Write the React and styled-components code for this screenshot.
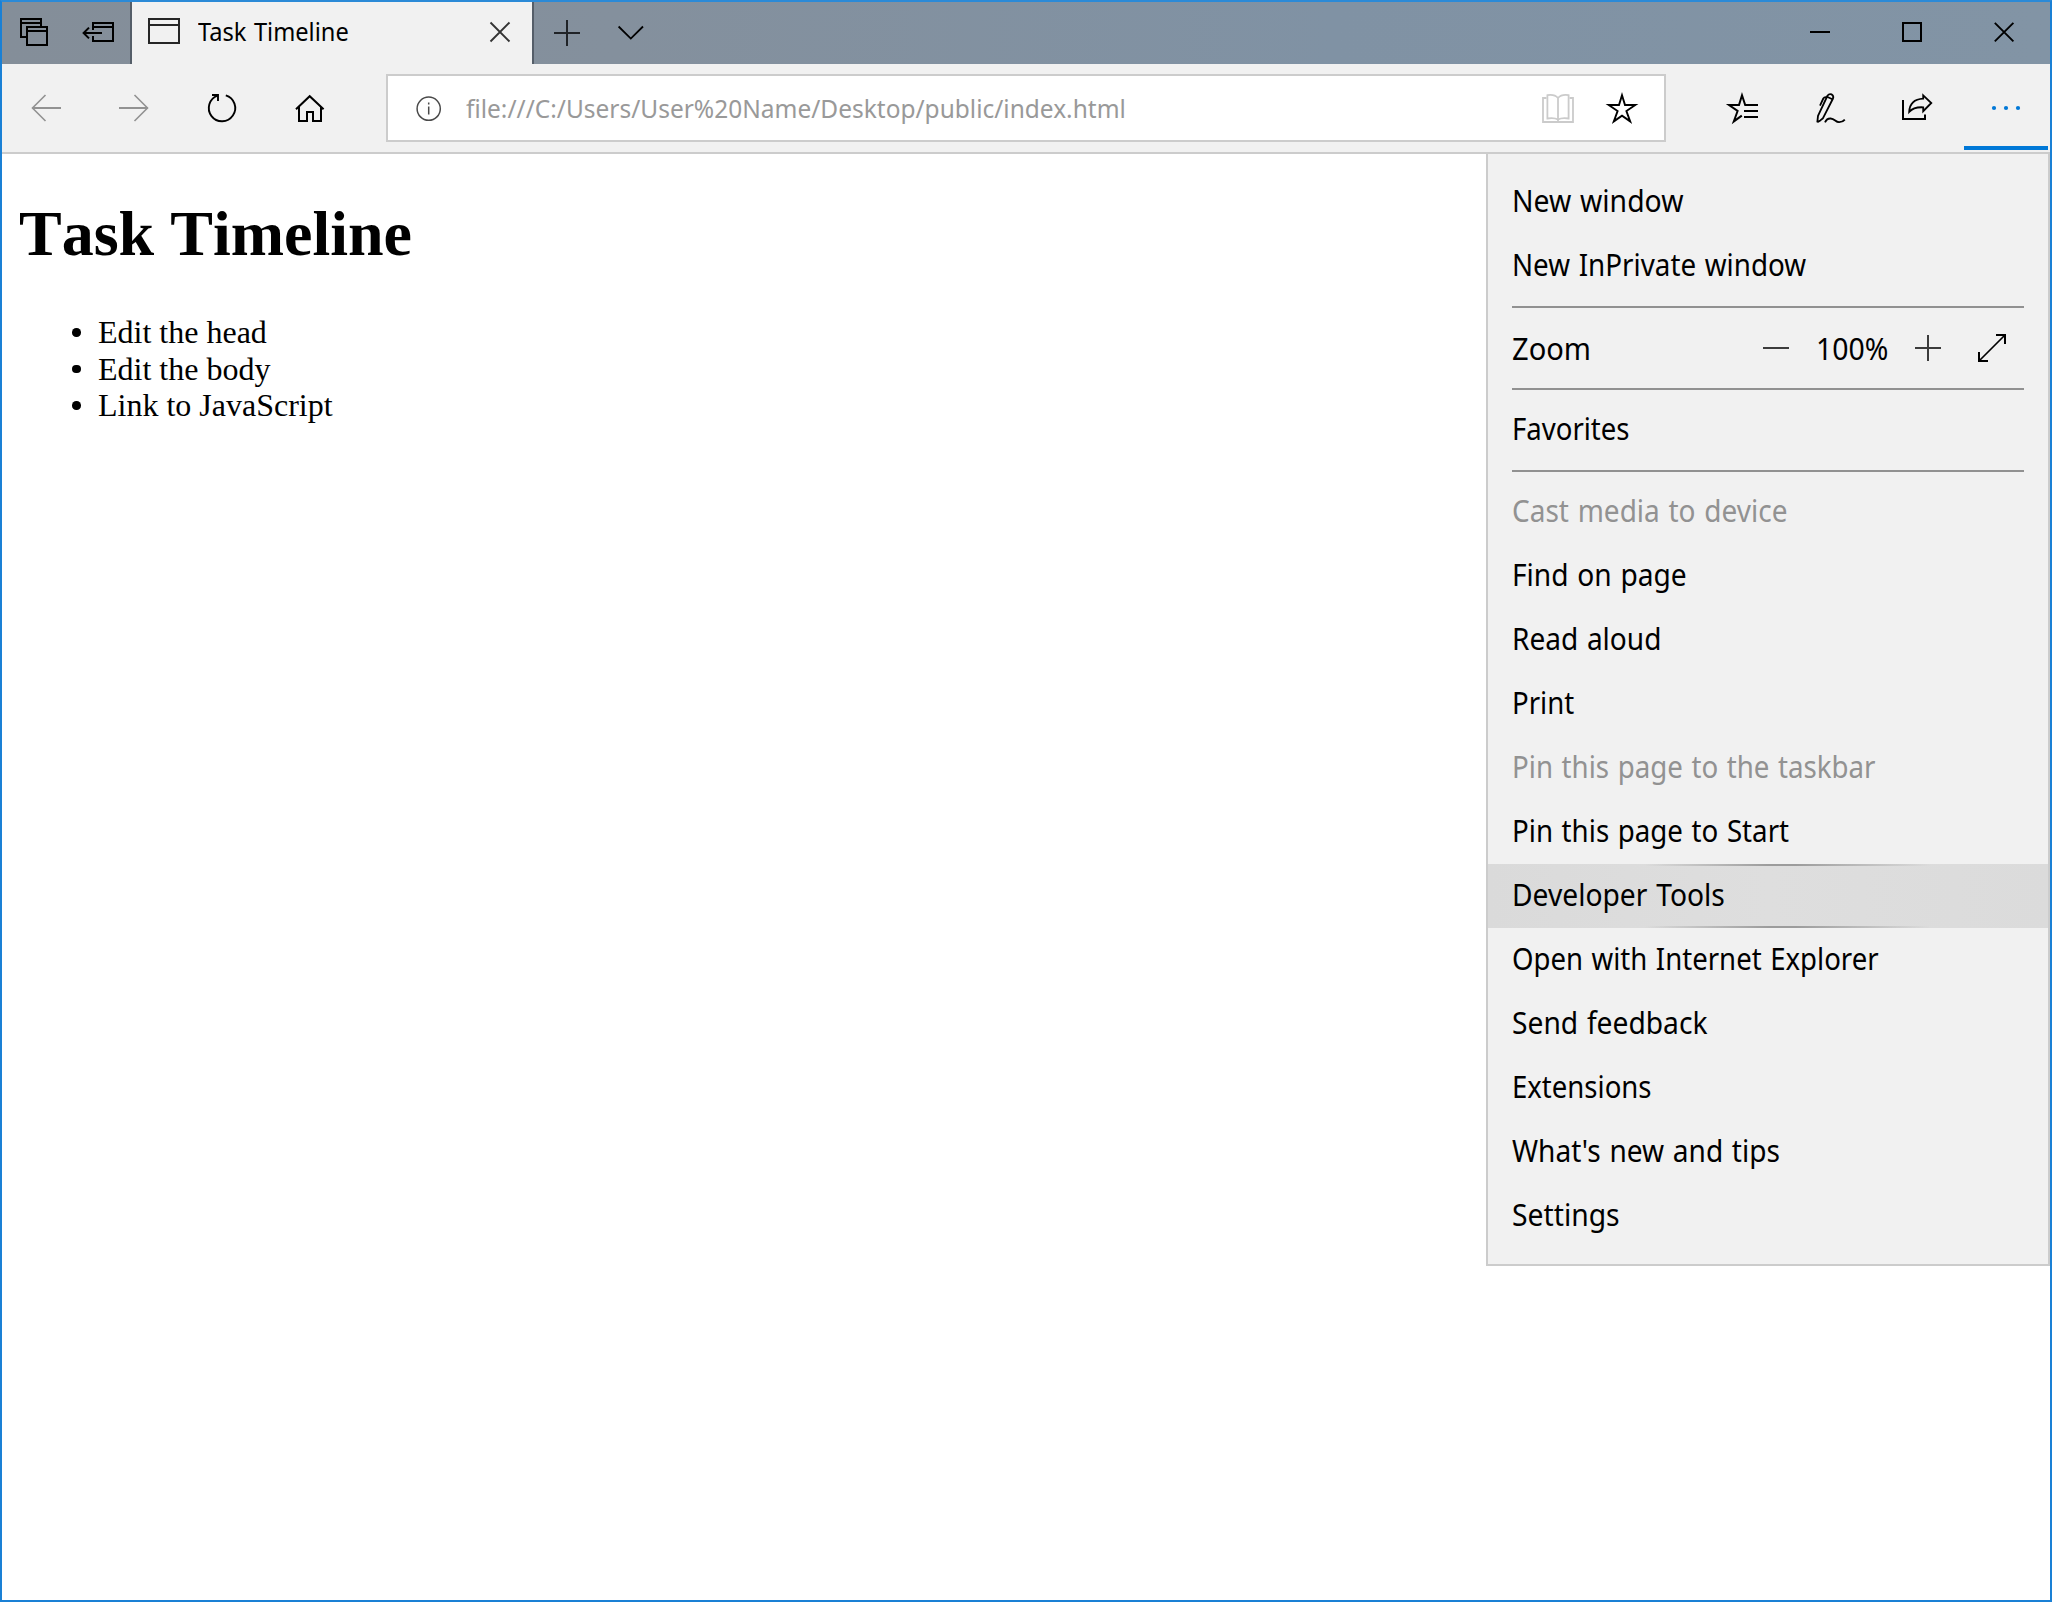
import React, { useLayoutEffect, useRef, useState } from "react";
import styled, { createGlobalStyle } from "styled-components";

const GlobalStyle = createGlobalStyle`
  * { box-sizing: border-box; }
  html, body { margin: 0; padding: 0; background: #fff; }
`;

const UI_FONT = '"Segoe UI", "Noto Sans", sans-serif';

const BrowserWindow = styled.div`
  position: relative;
  display: flex;
  flex-direction: column;
  width: 2052px;
  height: 1602px;
  border: 2px solid #1a80d5;
  border-top-color: #2b8ad7;
  background: #fff;
  font-family: ${UI_FONT};
  color: #000;
  overflow: hidden;
`;

const TitleBar = styled.header`
  display: flex;
  height: 62px;
  background: linear-gradient(90deg, #848e99 0%, #84909d 30%, #8092a4 65%, #8294a5 100%);
`;

const Spacer = styled.div`
  flex: 1;
`;

const EdgeGap = styled.div`
  flex: none;
  width: 2px;
`;

const Tab = styled.div`
  display: flex;
  align-items: flex-start;
  width: 404px;
  background: #f1f1f1;
  border: solid #555e69;
  border-width: 0 2px;
`;

const Toolbar = styled.nav`
  display: flex;
  flex: none;
  height: 90px;
  background: #f1f1f1;
  border-bottom: 2px solid #ccc;
`;

const IconButton = styled.button`
  display: flex;
  flex: none;
  padding: 0;
  border: 0;
  background: none;
  color: ${(p) => p.$color || "#000"};
  margin-left: ${(p) => p.$gap || 0}px;
`;

const Drawing = styled.svg`
  display: block;
  flex: none;
  fill: none;
  color: ${(p) => p.$color || "inherit"};
  stroke: currentColor;
  stroke-width: ${(p) => p.$weight || 2};
`;

const Dot = styled.circle`
  fill: currentColor;
  stroke: none;
`;

const MoreButton = styled(IconButton)`
  height: 86px;
  border-bottom: 4px solid #0078d7;
`;

const AddressBar = styled.div`
  display: flex;
  align-items: center;
  width: 1280px;
  height: 68px;
  margin: 10px 0 0 42px;
  border: 2px solid #ccc;
  background: #fff;
`;

const FittedText = styled.span`
  display: inline-block;
  white-space: pre;
  word-spacing: 1.5px;
  transform-origin: 0 50%;
`;

const TextSlot = styled.span`
  display: block;
  flex: none;
  width: ${(p) => p.$width}px;
  font-size: ${(p) => p.$size}px;
  line-height: ${(p) => p.$line || 62}px;
  margin-left: ${(p) => p.$left || 0}px;
  color: ${(p) => p.$color || "inherit"};
`;

const Menu = styled.aside`
  position: absolute;
  top: 152px;
  right: 0;
  display: flex;
  flex-direction: column;
  width: 564px;
  height: 1112px;
  padding: 16px 0;
  background: #f1f1f1;
  border: 2px solid #ccc;
  border-top: 0;
`;

const MenuRow = styled.div`
  display: flex;
  align-items: flex-start;
  height: 64px;
  padding-left: 23.6px;
  color: ${(p) => (p.$disabled ? "#929292" : "#000")};
  ${(p) =>
    p.$active &&
    `
    background:
      linear-gradient(90deg, transparent 28%, #9c9c9c 50%, #9c9c9c 55%, transparent 79%) top / 100% 2px no-repeat,
      linear-gradient(90deg, transparent 28%, #9c9c9c 50%, #9c9c9c 55%, transparent 79%) bottom / 100% 2px no-repeat,
      linear-gradient(90deg, #dadada, #dedede 50%, #dbdbdb);
  `}
`;

const ZoomRow = styled(MenuRow)`
  ${TextSlot} {
    padding-top: 2px;
  }
`;

const Divider = styled.hr`
  width: 512px;
  height: 2px;
  margin: 8px 24px;
  border: 0;
  background: #919191;
  flex: none;
`;

const Page = styled.main`
  padding: 43px 16px 0;
  font-family: "Liberation Serif", "Times New Roman", serif;
  font-kerning: none;
`;

const Heading = styled.h1`
  margin: 0 0 0 1px;
  font-size: 64px;
  line-height: 74px;
  font-weight: 700;
`;

const TaskList = styled.ul`
  list-style: none;
  margin: 43px 0 0;
  padding: 0 0 0 54px;
`;

const Task = styled.li`
  display: flex;
  align-items: center;
  gap: 17.5px;
  font-size: 32px;
  line-height: 36.5px;

  &::before {
    content: "";
    width: 8.5px;
    height: 8.5px;
    border-radius: 50%;
    background: #000;
  }
`;

/* Condenses a label horizontally so that its advance equals the given width. */
function Label({ width, children, ...rest }) {
  const ref = useRef(null);
  const [scale, setScale] = useState(1);
  useLayoutEffect(() => {
    setScale(width / ref.current.offsetWidth);
  }, [width, children]);
  return (
    <TextSlot $width={width} {...rest}>
      <FittedText ref={ref} style={{ transform: `scaleX(${scale})` }}>
        {children}
      </FittedText>
    </TextSlot>
  );
}

/* Icons are drawn in window coordinates; area is the x, y, width, height shown. */
function Icon({ area, children, ...rest }) {
  return (
    <Drawing width={area[2]} height={area[3]} viewBox={area.join(" ")} {...rest}>
      {children}
    </Drawing>
  );
}

const menuGroups = [
  [
    { text: "New window", width: 171 },
    { text: "New InPrivate window", width: 294.5 },
  ],
  "zoom",
  [{ text: "Favorites", width: 117.5 }],
  [
    { text: "Cast media to device", width: 275.5, disabled: true },
    { text: "Find on page", width: 174.5 },
    { text: "Read aloud", width: 149.5 },
    { text: "Print", width: 62.5 },
    { text: "Pin this page to the taskbar", width: 363.5, disabled: true },
    { text: "Pin this page to Start", width: 277 },
    { text: "Developer Tools", width: 212.5, active: true },
    { text: "Open with Internet Explorer", width: 366.5 },
    { text: "Send feedback", width: 195.5 },
    { text: "Extensions", width: 139.5 },
    { text: "What's new and tips", width: 267.5 },
    { text: "Settings", width: 107.5 },
  ],
];

function ZoomControls() {
  return (
    <ZoomRow>
      <Label width={79.5} $size={30}>Zoom</Label>
      <IconButton $gap={154.9} $color="#3c3c3c">
        <Icon area={[1746, 316, 60, 64]}>
          <path d="M1763 348H1789" />
        </Icon>
      </IconButton>
      <Label width={72} $size={30} $left={10}>100%</Label>
      <IconButton $gap={10} $color="#3c3c3c">
        <Icon area={[1898, 316, 60, 64]}>
          <path d="M1915 348H1941M1928 335V361" />
        </Icon>
      </IconButton>
      <IconButton>
        <Icon area={[1958, 316, 66, 64]}>
          <path d="M1996 335H2005V344M1979 352V361H1988" />
          <path d="M2005 335L1979 361" strokeWidth="1.7" />
        </Icon>
      </IconButton>
    </ZoomRow>
  );
}

export default function App() {
  return (
    <>
      <GlobalStyle />
      <BrowserWindow>
        <TitleBar>
          <IconButton>
            <Icon area={[2, 2, 64, 62]}>
              <path d="M26 37H21V19H41V26M21 23H41" />
              <path d="M27 27H47V45H27ZM27 31H47" />
            </Icon>
          </IconButton>
          <IconButton>
            <Icon area={[66, 2, 64, 62]}>
              <path d="M93 30V23H113V41H93V36M93 27H113M84 33H102" />
              <path d="M89 27.6L83.6 33L89 38.4" />
            </Icon>
          </IconButton>
          <Tab>
            <Icon area={[132, 2, 64, 62]} $color="#262626">
              <path d="M149 19H179V43H149ZM149 25H179" />
            </Icon>
            <Label width={151} $size={25.5} $left={2} $line={59}>Task Timeline</Label>
            <Spacer />
            <IconButton $color="#333">
              <Icon area={[468, 2, 64, 62]} $weight={1.9}>
                <path d="M490.5 22.5L509.5 41.5M509.5 22.5L490.5 41.5" />
              </Icon>
            </IconButton>
          </Tab>
          <IconButton $color="#202327">
            <Icon area={[534, 2, 64, 62]}>
              <path d="M554 33H580M567 20V46" />
            </Icon>
          </IconButton>
          <IconButton>
            <Icon area={[598, 2, 64, 62]} $weight={1.8}>
              <path d="M618.6 26.5L630.8 38.6L643 26.5" />
            </Icon>
          </IconButton>
          <Spacer />
          <IconButton>
            <Icon area={[1774, 2, 92, 62]}>
              <path d="M1810 32H1830" />
            </Icon>
          </IconButton>
          <IconButton>
            <Icon area={[1866, 2, 92, 62]}>
              <path d="M1903 23H1921V41H1903Z" />
            </Icon>
          </IconButton>
          <IconButton>
            <Icon area={[1958, 2, 92, 62]} $weight={1.9}>
              <path d="M1994.8 22.8L2013.4 41.4M2013.4 22.8L1994.8 41.4" />
            </Icon>
          </IconButton>
        </TitleBar>

        <Toolbar>
          <IconButton $color="#929292">
            <Icon area={[2, 64, 88, 88]}>
              <path d="M32.5 108H61" />
              <path d="M45.5 95L32.5 108L45.5 121" strokeWidth="1.6" />
            </Icon>
          </IconButton>
          <IconButton $color="#929292">
            <Icon area={[90, 64, 88, 88]}>
              <path d="M119 108H147.5" />
              <path d="M134.5 95L147.5 108L134.5 121" strokeWidth="1.6" />
            </Icon>
          </IconButton>
          <IconButton>
            <Icon area={[178, 64, 88, 88]} $weight={1.9}>
              <path d="M225.8 95.4A13.2 13.2 0 1 1 217.6 95.6" />
              <path d="M212 95H218V101" />
            </Icon>
          </IconButton>
          <IconButton>
            <Icon area={[266, 64, 78, 88]}>
              <path d="M296 109.2L309.7 96.2L323.6 109.2" />
              <path d="M299 107V121H307V112H313V121H321V107" />
            </Icon>
          </IconButton>
          <AddressBar>
            <Icon area={[388, 76, 76, 64]} $color="#4a4a4a" $weight={1.5}>
              <circle cx="428.7" cy="108.7" r="11.6" />
              <path d="M428.7 106.5V114.6M428.7 102.6V104.4" />
            </Icon>
            <Label width={660} $size={25.2} $left={1.7} $line={66} $color="#999">
              file:///C:/Users/User%20Name/Desktop/public/index.html
            </Label>
            <Spacer />
            <IconButton $color="#cbcbcb">
              <Icon area={[1526, 76, 64, 64]} $weight={1.8}>
                <path d="M1546.5 98H1543V122H1573V98H1569.5" />
                <path d="M1558 98Q1554.5 94 1547.4 95.2V118.5Q1554.5 117.5 1558 119.6" />
                <path d="M1558 98Q1561.5 94 1568.6 95.2V118.5Q1561.5 117.5 1558 119.6" />
                <path d="M1558 98V122" />
              </Icon>
            </IconButton>
            <IconButton>
              <Icon area={[1590, 76, 74, 64]} $weight={1.9}>
                <path d="M1622 95.2L1625 105H1635.3L1626.4 111L1630.2 121.4L1622 115.6L1613.8 121.4L1617.6 111L1608.7 105H1619Z" />
              </Icon>
            </IconButton>
          </AddressBar>
          <Spacer />
          <IconButton>
            <Icon area={[1700, 64, 86, 88]}>
              <path d="M1758 105H1745.2L1742 95.2L1739 105H1729L1737.6 111L1733.8 121.4L1741.8 115.6" />
              <path d="M1744 111H1758M1744 117H1758" />
            </Icon>
          </IconButton>
          <IconButton>
            <Icon area={[1786, 64, 88, 88]} $weight={1.8} strokeLinejoin="round">
              <path d="M1817.3 122.3L1818 115.8L1827.6 95.5Q1829.2 93.4 1831.7 94.4Q1834 96 1833 98.5L1823 118.2L1820.3 120.4L1817.3 122.3" />
              <path d="M1827 96.8L1832.4 99.3M1820 105.6L1823.3 98.5Q1824.4 96.7 1826.8 97.3" />
              <path d="M1825 122.4Q1826.8 118.3 1830.6 118.5C1835 118.8 1835.4 122.2 1839 122.2Q1842.5 122.3 1844.8 119.6" />
            </Icon>
          </IconButton>
          <IconButton>
            <Icon area={[1874, 64, 90, 88]}>
              <path d="M1903 100V119H1925V114.5" />
              <path d="M1923.2 95.3L1931.3 103L1923.2 111.2V107.3Q1913.7 106.8 1909.2 111.8Q1909.8 99.4 1923.2 98.6Z" strokeWidth="1.8" />
            </Icon>
          </IconButton>
          <MoreButton $color="#0078d7">
            <Icon area={[1964, 64, 84, 82]}>
              <Dot cx="1994" cy="108" r="2.1" />
              <Dot cx="2006" cy="108" r="2.1" />
              <Dot cx="2018" cy="108" r="2.1" />
            </Icon>
          </MoreButton>
          <EdgeGap />
        </Toolbar>

        <Page>
          <Heading>Task Timeline</Heading>
          <TaskList>
            <Task>Edit the head</Task>
            <Task>Edit the body</Task>
            <Task>Link to JavaScript</Task>
          </TaskList>
        </Page>

        <Menu>
          {menuGroups.map((group, index) => (
            <React.Fragment key={index}>
              {index > 0 && <Divider />}
              {group === "zoom" ? (
                <ZoomControls />
              ) : (
                group.map((item) => (
                  <MenuRow key={item.text} $disabled={item.disabled} $active={item.active}>
                    <Label width={item.width} $size={30}>{item.text}</Label>
                  </MenuRow>
                ))
              )}
            </React.Fragment>
          ))}
        </Menu>
      </BrowserWindow>
    </>
  );
}
